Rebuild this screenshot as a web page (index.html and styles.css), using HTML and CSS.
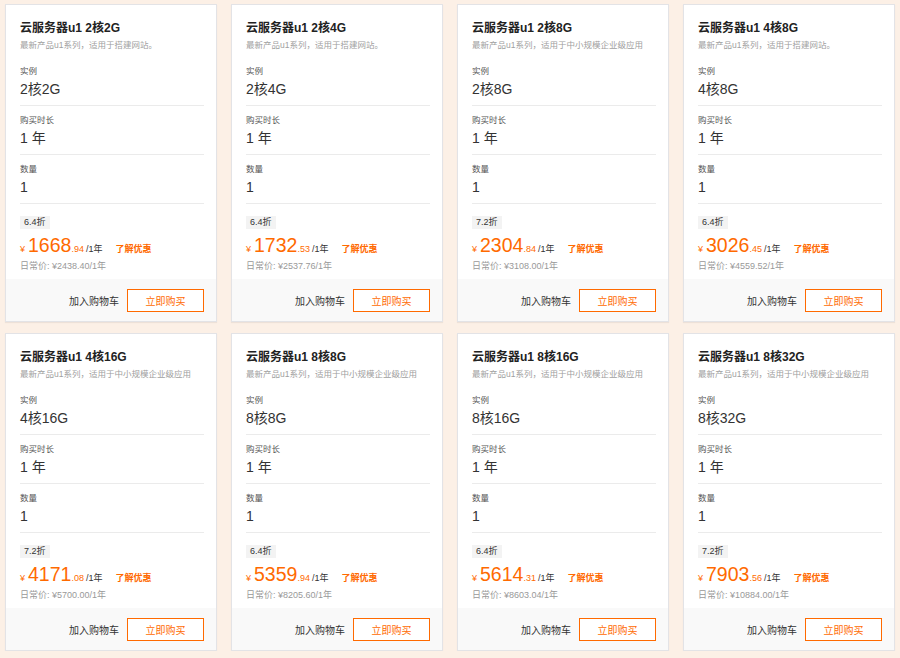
FILE: index.html
```html
<!DOCTYPE html>
<html lang="zh-CN">
<head>
<meta charset="utf-8">
<title>云服务器</title>
<link rel="stylesheet" href="styles.css">
</head>
<body>
<div class="grid">
  <div class="card">
    <div class="body">
      <div class="head"><div class="title">云服务器u1 2核2G</div><div class="sub">最新产品u1系列，适用于搭建网站。</div></div>
      <div class="sec"><div class="lbl">实例</div><div class="val">2核2G</div></div>
      <div class="sec"><div class="lbl">购买时长</div><div class="val">1 年</div></div>
      <div class="sec"><div class="lbl">数量</div><div class="val">1</div></div>
      <div class="badge">6.4折</div>
      <div class="price"><span class="yen">¥</span><span class="big">1668</span><span class="dec">.94</span><span class="per">/1年</span><span class="more">了解优惠</span></div>
      <div class="orig">日常价: ¥2438.40/1年</div>
    </div>
    <div class="foot"><span class="cart">加入购物车</span><span class="buy">立即购买</span></div>
  </div>
  <div class="card">
    <div class="body">
      <div class="head"><div class="title">云服务器u1 2核4G</div><div class="sub">最新产品u1系列，适用于搭建网站。</div></div>
      <div class="sec"><div class="lbl">实例</div><div class="val">2核4G</div></div>
      <div class="sec"><div class="lbl">购买时长</div><div class="val">1 年</div></div>
      <div class="sec"><div class="lbl">数量</div><div class="val">1</div></div>
      <div class="badge">6.4折</div>
      <div class="price"><span class="yen">¥</span><span class="big">1732</span><span class="dec">.53</span><span class="per">/1年</span><span class="more">了解优惠</span></div>
      <div class="orig">日常价: ¥2537.76/1年</div>
    </div>
    <div class="foot"><span class="cart">加入购物车</span><span class="buy">立即购买</span></div>
  </div>
  <div class="card">
    <div class="body">
      <div class="head"><div class="title">云服务器u1 2核8G</div><div class="sub">最新产品u1系列，适用于中小规模企业级应用</div></div>
      <div class="sec"><div class="lbl">实例</div><div class="val">2核8G</div></div>
      <div class="sec"><div class="lbl">购买时长</div><div class="val">1 年</div></div>
      <div class="sec"><div class="lbl">数量</div><div class="val">1</div></div>
      <div class="badge">7.2折</div>
      <div class="price"><span class="yen">¥</span><span class="big">2304</span><span class="dec">.84</span><span class="per">/1年</span><span class="more">了解优惠</span></div>
      <div class="orig">日常价: ¥3108.00/1年</div>
    </div>
    <div class="foot"><span class="cart">加入购物车</span><span class="buy">立即购买</span></div>
  </div>
  <div class="card">
    <div class="body">
      <div class="head"><div class="title">云服务器u1 4核8G</div><div class="sub">最新产品u1系列，适用于搭建网站。</div></div>
      <div class="sec"><div class="lbl">实例</div><div class="val">4核8G</div></div>
      <div class="sec"><div class="lbl">购买时长</div><div class="val">1 年</div></div>
      <div class="sec"><div class="lbl">数量</div><div class="val">1</div></div>
      <div class="badge">6.4折</div>
      <div class="price"><span class="yen">¥</span><span class="big">3026</span><span class="dec">.45</span><span class="per">/1年</span><span class="more">了解优惠</span></div>
      <div class="orig">日常价: ¥4559.52/1年</div>
    </div>
    <div class="foot"><span class="cart">加入购物车</span><span class="buy">立即购买</span></div>
  </div>
  <div class="card">
    <div class="body">
      <div class="head"><div class="title">云服务器u1 4核16G</div><div class="sub">最新产品u1系列，适用于中小规模企业级应用</div></div>
      <div class="sec"><div class="lbl">实例</div><div class="val">4核16G</div></div>
      <div class="sec"><div class="lbl">购买时长</div><div class="val">1 年</div></div>
      <div class="sec"><div class="lbl">数量</div><div class="val">1</div></div>
      <div class="badge">7.2折</div>
      <div class="price"><span class="yen">¥</span><span class="big">4171</span><span class="dec">.08</span><span class="per">/1年</span><span class="more">了解优惠</span></div>
      <div class="orig">日常价: ¥5700.00/1年</div>
    </div>
    <div class="foot"><span class="cart">加入购物车</span><span class="buy">立即购买</span></div>
  </div>
  <div class="card">
    <div class="body">
      <div class="head"><div class="title">云服务器u1 8核8G</div><div class="sub">最新产品u1系列，适用于中小规模企业级应用</div></div>
      <div class="sec"><div class="lbl">实例</div><div class="val">8核8G</div></div>
      <div class="sec"><div class="lbl">购买时长</div><div class="val">1 年</div></div>
      <div class="sec"><div class="lbl">数量</div><div class="val">1</div></div>
      <div class="badge">6.4折</div>
      <div class="price"><span class="yen">¥</span><span class="big">5359</span><span class="dec">.94</span><span class="per">/1年</span><span class="more">了解优惠</span></div>
      <div class="orig">日常价: ¥8205.60/1年</div>
    </div>
    <div class="foot"><span class="cart">加入购物车</span><span class="buy">立即购买</span></div>
  </div>
  <div class="card">
    <div class="body">
      <div class="head"><div class="title">云服务器u1 8核16G</div><div class="sub">最新产品u1系列，适用于中小规模企业级应用</div></div>
      <div class="sec"><div class="lbl">实例</div><div class="val">8核16G</div></div>
      <div class="sec"><div class="lbl">购买时长</div><div class="val">1 年</div></div>
      <div class="sec"><div class="lbl">数量</div><div class="val">1</div></div>
      <div class="badge">6.4折</div>
      <div class="price"><span class="yen">¥</span><span class="big">5614</span><span class="dec">.31</span><span class="per">/1年</span><span class="more">了解优惠</span></div>
      <div class="orig">日常价: ¥8603.04/1年</div>
    </div>
    <div class="foot"><span class="cart">加入购物车</span><span class="buy">立即购买</span></div>
  </div>
  <div class="card">
    <div class="body">
      <div class="head"><div class="title">云服务器u1 8核32G</div><div class="sub">最新产品u1系列，适用于中小规模企业级应用</div></div>
      <div class="sec"><div class="lbl">实例</div><div class="val">8核32G</div></div>
      <div class="sec"><div class="lbl">购买时长</div><div class="val">1 年</div></div>
      <div class="sec"><div class="lbl">数量</div><div class="val">1</div></div>
      <div class="badge">7.2折</div>
      <div class="price"><span class="yen">¥</span><span class="big">7903</span><span class="dec">.56</span><span class="per">/1年</span><span class="more">了解优惠</span></div>
      <div class="orig">日常价: ¥10884.00/1年</div>
    </div>
    <div class="foot"><span class="cart">加入购物车</span><span class="buy">立即购买</span></div>
  </div>
</div>
</body>
</html>
```
FILE: styles.css
```css
html, body {
  background: #fcf0e6;
}
body {
  margin: 0;
  padding: 4px 0 0 5px;
  font-family: "Liberation Sans", "Noto Sans CJK SC", sans-serif;
  color: #333;
}
.grid {
  display: grid;
  grid-template-columns: repeat(4, 212px);
  column-gap: 14px;
  row-gap: 11px;
}
.card {
  box-sizing: border-box;
  height: 318px;
  background: #fff;
  border: 1px solid #e3e3e6;
  box-shadow: 0 1px 1px rgba(0, 0, 0, 0.06);
  display: flex;
  flex-direction: column;
}
.body {
  flex: 1;
  padding: 0 12px 0 14px;
}
.head {
  padding: 15px 0 6px;
}
.title {
  font-size: 12px;
  line-height: 16px;
  font-weight: bold;
  color: #222;
  white-space: nowrap;
}
.sub {
  margin-top: 3px;
  font-size: 8.5px;
  line-height: 12px;
  color: #a0a0a0;
  white-space: nowrap;
}
.sec {
  padding: 8px 0 6px;
  border-bottom: 1px solid #ebebeb;
}
.lbl {
  font-size: 8.5px;
  line-height: 12px;
  color: #555;
}
.val {
  margin-top: 2px;
  font-size: 14px;
  line-height: 20px;
  color: #333;
}
.badge {
  display: inline-block;
  margin-top: 12px;
  padding: 0 4px;
  background: #f3f3f3;
  font-size: 9px;
  line-height: 13px;
  color: #333;
}
.price {
  margin-top: 4px;
  height: 24px;
  line-height: 24px;
  color: #ff6a00;
  white-space: nowrap;
}
.yen {
  font-size: 9px;
  margin-right: 3px;
}
.big {
  font-size: 19.5px;
}
.dec {
  font-size: 9px;
}
.per {
  font-size: 9px;
  color: #333;
  margin-left: 2px;
}
.more {
  font-size: 9px;
  font-weight: bold;
  margin-left: 13px;
}
.orig {
  margin-top: 3px;
  font-size: 9px;
  line-height: 12px;
  color: #999;
}
.foot {
  height: 42px;
  background: #f9f9f9;
  display: flex;
  justify-content: flex-end;
  align-items: center;
  padding-right: 12px;
}
.cart {
  font-size: 10px;
  color: #333;
  margin-right: 8px;
}
.buy {
  box-sizing: border-box;
  width: 77px;
  height: 23px;
  border: 1px solid #ff6a00;
  background: #fff;
  color: #ff6a00;
  font-size: 10px;
  display: flex;
  align-items: center;
  justify-content: center;
}
```
